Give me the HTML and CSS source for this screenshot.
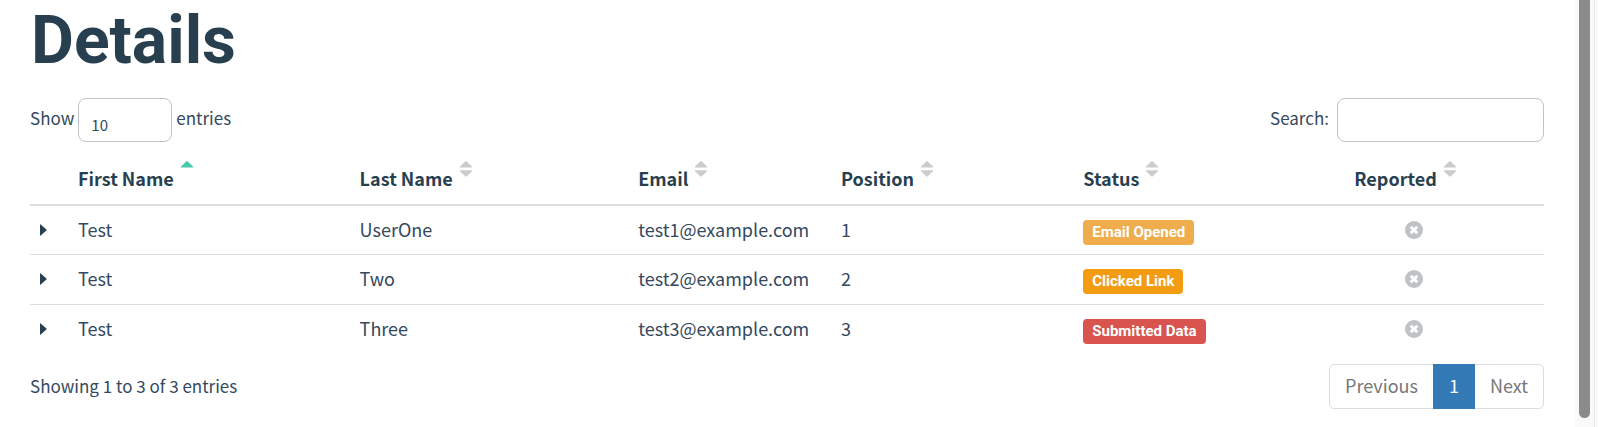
FILE: index.html
```html
<!DOCTYPE html>
<html lang="en">
<head>
<meta charset="utf-8">
<title>Details</title>
<link rel="stylesheet" href="styles.css">
</head>
<body>
<svg class="symbols" aria-hidden="true">
  <symbol id="sort" viewBox="0 0 14 18"><path d="M6.2 1.4Q7 .6 7.8 1.4L12.8 6.2Q13.8 7.500 12.400 7.500H1.600Q.2 7.500 1.200 6.200ZM1.600 10.300H12.400Q13.800 10.300 12.800 11.600L7.800 16.300Q7 17.100 6.200 16.300L1.200 11.600Q.2 10.300 1.600 10.300Z"/></symbol>
  <symbol id="sort-up" viewBox="0 0 14 18"><path d="M6.200 1.400Q7 .6 7.800 1.400L12.800 6.200Q13.800 7.500 12.400 7.500H1.600Q.2 7.500 1.200 6.200Z"/></symbol>
  <symbol id="caret" viewBox="0 0 7 12"><path d="M0 .6Q0-.2.700.4L6.400 5.500Q6.900 6 6.400 6.500L.7 11.600Q0 12.200 0 11.400Z"/></symbol>
  <symbol id="times" viewBox="0 0 18 18"><circle cx="9" cy="9" r="9"/><path class="cross" d="M5.700 5.700L12.300 12.300M12.300 5.700L5.700 12.300"/></symbol>
</svg>
<div class="page">
  <main class="content">
    <h1 class="title">Details</h1>
    <div class="bar controls">
      <label class="length"><span class="caption">Show</span>
        <select class="field length-select"><option>10</option><option>25</option><option>50</option></select>
        <span class="caption">entries</span></label>
      <label class="search"><span class="caption">Search:</span> <input class="field search-input" type="search"></label>
    </div>
    <table class="results">
      <colgroup><col class="c-toggle"><col class="c-first"><col class="c-last"><col class="c-email"><col class="c-position"><col class="c-status"><col></colgroup>
      <thead>
        <tr>
          <th></th>
          <th><span class="head">First Name<svg class="sort active"><use href="#sort-up"/></svg></span></th>
          <th><span class="head">Last Name<svg class="sort"><use href="#sort"/></svg></span></th>
          <th><span class="head">Email<svg class="sort"><use href="#sort"/></svg></span></th>
          <th><span class="head">Position<svg class="sort"><use href="#sort"/></svg></span></th>
          <th><span class="head">Status<svg class="sort"><use href="#sort"/></svg></span></th>
          <th><span class="head">Reported<svg class="sort"><use href="#sort"/></svg></span></th>
        </tr>
      </thead>
      <tbody>
        <tr>
          <td><button class="toggle" aria-label="Expand"><svg class="caret"><use href="#caret"/></svg></button></td>
          <td>Test</td><td>UserOne</td><td>test1@example.com</td><td>1</td>
          <td><span class="label opened">Email Opened</span></td>
          <td class="reported"><svg class="times"><use href="#times"/></svg></td>
        </tr>
        <tr>
          <td><button class="toggle" aria-label="Expand"><svg class="caret"><use href="#caret"/></svg></button></td>
          <td>Test</td><td>Two</td><td>test2@example.com</td><td>2</td>
          <td><span class="label clicked">Clicked Link</span></td>
          <td class="reported"><svg class="times"><use href="#times"/></svg></td>
        </tr>
        <tr>
          <td><button class="toggle" aria-label="Expand"><svg class="caret"><use href="#caret"/></svg></button></td>
          <td>Test</td><td>Three</td><td>test3@example.com</td><td>3</td>
          <td><span class="label submitted">Submitted Data</span></td>
          <td class="reported"><svg class="times"><use href="#times"/></svg></td>
        </tr>
      </tbody>
    </table>
    <div class="bar footer">
      <div class="info">Showing 1 to 3 of 3 entries</div>
      <nav class="pager"><a class="page-link" href="#">Previous</a><a class="page-link current" href="#">1</a><a class="page-link" href="#">Next</a></nav>
    </div>
  </main>
  <div class="track"><div class="thumb"></div></div>
</div>
</body>
</html>
```
FILE: styles.css
```css
* { box-sizing: border-box; }
body {
  margin: 0;
  background: #fff;
  color: #34495e;
  font: 17px/24px "Noto Sans CJK SC", sans-serif;
}
.symbols { position: absolute; width: 0; height: 0; }
.page { display: flex; min-height: 100vh; }
.content { flex: 1; padding: 0 31px 0 30px; }
.title {
  margin: 0;
  padding: 5px 0 0 1px;
  font: bold 66px/72px Roboto, sans-serif;
  color: #283f50;
}
.bar { display: flex; justify-content: space-between; align-items: center; }
.controls { padding-top: 21px; }
.length, .search { display: flex; align-items: center; gap: 4px; height: 44px; }
.search { gap: 8px; }
.caption { padding-bottom: 4px; }
.field {
  height: 44px;
  border: 1px solid #bdc3c7;
  border-radius: 8px;
  background: #fff;
  color: inherit;
  font: 15px/24px "Noto Sans CJK SC", sans-serif;
  appearance: none;
  outline: 0;
}
.length-select { width: 94px; padding: 9px 12px 0; }
.search-input { width: 207px; padding: 8px 12px; }
.results {
  width: 100%;
  margin-top: 12px;
  border-collapse: separate;
  border-spacing: 0;
  table-layout: fixed;
  font-size: 18px;
}
.c-toggle { width: 38px; }
.c-first { width: 18.6%; }
.c-last { width: 18.4%; }
.c-email { width: 13.4%; }
.c-position { width: 16%; }
.c-status { width: 17.9%; }
th, td { padding: 0 10px; text-align: left; white-space: nowrap; }
th { height: 52px; padding-bottom: 2px; border-bottom: 2px solid #ddd; color: #283f50; }
td { height: 50px; padding-bottom: 4px; border-top: 1px solid #ddd; }
tbody tr:first-child td { height: 48px; padding-bottom: 2px; border-top: 0; }
.head { display: inline-flex; align-items: flex-start; gap: 6px; }
.sort { width: 14px; height: 18px; margin-top: -6px; fill: #ccc; }
.active { fill: #48c9b0; }
.toggle { display: block; margin-top: 2px; padding: 0; border: 0; background: none; }
.caret { display: block; width: 7px; height: 12px; fill: #283f50; }
.times { display: block; width: 18px; height: 18px; margin: 2px auto 0; fill: #bdc3c7; }
.cross { stroke: #fff; stroke-width: 3; }
.reported { padding-right: 70px; }
.label {
  display: block;
  width: fit-content;
  margin-top: 7px;
  padding: 0 9px;
  border-radius: 4px;
  color: #fff;
  font: bold 15px/25px Roboto, sans-serif;
}
.opened { background: #f0ad4e; }
.clicked { background: #f39c12; }
.submitted { background: #d9534f; }
.footer { padding-top: 10px; }
.info { padding-bottom: 2px; }
.pager { display: flex; border: 1px solid #ddd; border-radius: 5px; }
.page-link { padding: 8px 15px 10px; font-size: 18px; line-height: 25px; color: #777; text-decoration: none; }
.current { margin: -1px 0; padding: 9px 16px 11px; background: #337ab7; color: #fff; }
.track {
  width: 23px;
  padding: 0 8px 0 4px;
  background: linear-gradient(to right, #fafafa 19px, #e7e7e7 19px, #e7e7e7 20px, #fafafa 20px);
}
.thumb { height: calc(100% - 9px); border-radius: 0 0 6px 6px; background: #8b8b8b; }
```
